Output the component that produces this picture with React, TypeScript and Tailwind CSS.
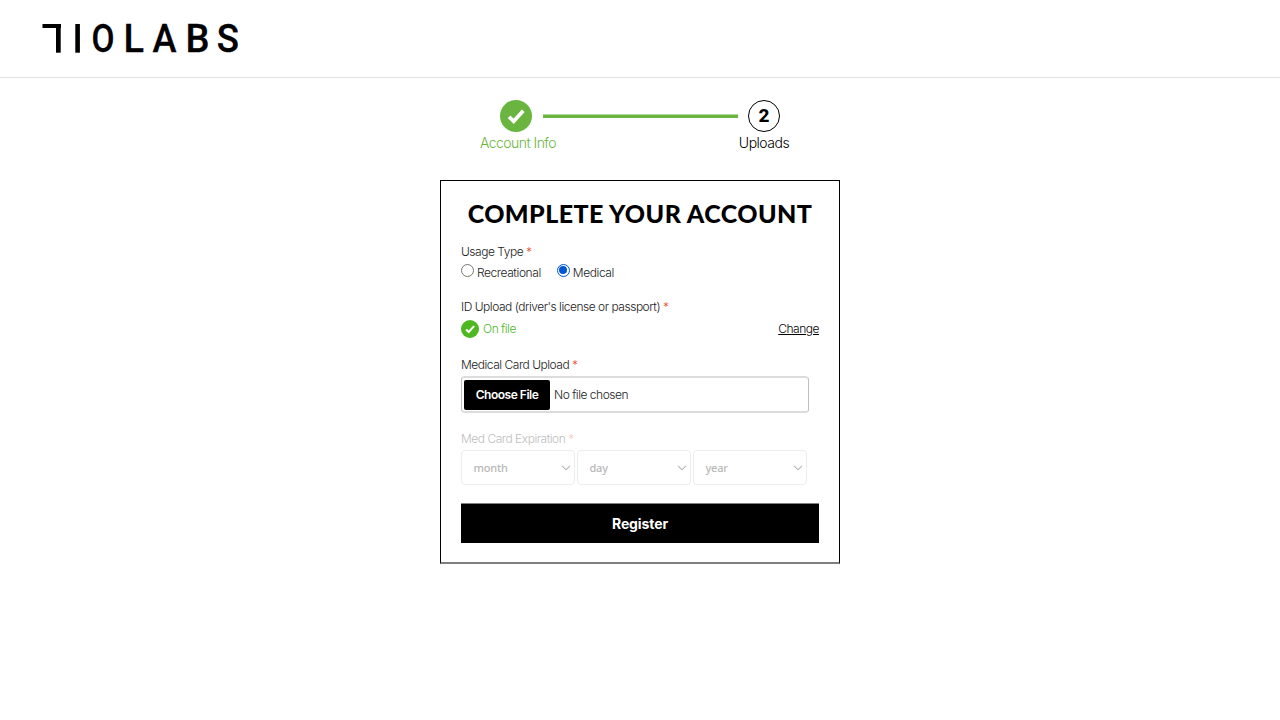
import type { ReactNode } from "react";

const LOGO: { ch: string; x: number; w: number }[] = [
  { ch: "O", x: 49.6, w: 23 },
  { ch: "L", x: 81.5, w: 20.5 },
  { ch: "A", x: 110.5, w: 24 },
  { ch: "B", x: 143.5, w: 24 },
  { ch: "S", x: 174.7, w: 22.2 },
];

function Logo() {
  return (
    <svg width="208" height="56" viewBox="0 -12 208 56" role="img" aria-label="710 Labs" className="block">
      <rect x="0.5" y="2" width="18.5" height="4" />
      <rect x="14" y="2" width="4.7" height="28.7" />
      <rect x="33.3" y="2" width="4.6" height="28.7" />
      {LOGO.map((l) => (
        <text
          key={l.ch}
          x={l.x}
          y="30.2"
          textLength={l.w}
          lengthAdjust="spacingAndGlyphs"
          className="font-['Roboto',sans-serif] text-[39.5px] font-medium"
          stroke="#000"
          strokeWidth="0.3"
        >
          {l.ch}
        </text>
      ))}
    </svg>
  );
}

function Check({ className }: { className: string }) {
  return (
    <svg viewBox="0 0 18 18" className={className} fill="none">
      <path d="M5.1 9.4 7.7 12 13.1 6.1" stroke="#fff" strokeWidth="2.1" />
    </svg>
  );
}

function Label({ children, className = "" }: { children: ReactNode; className?: string }) {
  return (
    <div className={`h-4 text-[12px] leading-4 tracking-[-0.48px] whitespace-nowrap ${className}`}>
      {children} <span className="text-[#e8472b]">*</span>
    </div>
  );
}

function Radio({ label, checked = false }: { label: string; checked?: boolean }) {
  return (
    <label className="flex">
      <span
        className={`mt-[1.5px] mr-[3px] flex size-[13px] items-center justify-center rounded-full border ${
          checked ? "border-[#0057d0]" : "border-[#767676]"
        }`}
      >
        {checked && <span className="size-[8px] rounded-full bg-[#0057d0]" />}
      </span>
      <span className="pt-[3px] text-[12px] leading-4 tracking-[-0.42px]">{label}</span>
    </label>
  );
}

function Select({ label }: { label: string }) {
  return (
    <div className="flex h-[35px] w-[114px] items-center justify-between rounded-[4px] border border-[#ececec] pr-[3px] pl-[11.5px] font-['Noto_Sans',sans-serif] text-[11px] font-medium tracking-[-0.2px] text-[#b8b8b8]">
      <span className="pt-[2px]">{label}</span>
      <svg width="10" height="6" viewBox="0 0 10 6" fill="none" stroke="#b5b5b5" strokeWidth="1.1">
        <path d="M1 .8 5 4.8 9 .8" />
      </svg>
    </div>
  );
}

export default function App() {
  return (
    <div className="min-h-[720px] bg-white font-['Inter','Liberation_Sans',sans-serif] font-light text-[#222]">
      <header className="h-[78px] border-b border-[#e3e3e3] pt-[10px] pl-[42px]">
        <Logo />
      </header>
      <main className="flex flex-col items-center pt-[22px]">
        <div className="flex h-[80px] w-[324px] items-start justify-between pl-[2px]">
          <div className="flex w-[76px] shrink-0 flex-col items-center text-[#69b53f]">
            <div className="mr-[4px] flex size-8 items-center justify-center rounded-full bg-[#69b53f]">
              <Check className="size-8" />
            </div>
            <span className="mt-[2px] text-[14px] leading-[18px] tracking-[-0.55px] whitespace-nowrap">
              Account Info
            </span>
          </div>
          <div className="mt-[14px] -mr-3 -ml-[14px] h-[4px] w-[195px] shrink-0 border-t border-[#b4daa0] bg-[#69b53f]" />
          <div className="flex w-[76px] shrink-0 flex-col items-center text-black">
            <div className="flex size-8 items-center justify-center rounded-full border border-black font-['Roboto',sans-serif] text-[19px] font-extrabold">
              2
            </div>
            <span className="mt-[2px] text-[14px] leading-[18px] tracking-[-0.5px] whitespace-nowrap">Uploads</span>
          </div>
        </div>
        <section className="h-[384px] w-[400px] border border-b-2 border-black border-b-[#808080] px-5 pt-5">
          <h1 className="flex h-[26px] items-center justify-center font-['Lato',sans-serif] text-[25px] font-black tracking-[0.43px] whitespace-nowrap text-black">
            COMPLETE YOUR ACCOUNT
          </h1>
          <Label className="mt-[17px]">Usage Type</Label>
          <div className="mt-[2px] flex h-5 gap-4">
            <Radio label="Recreational" />
            <Radio label="Medical" checked />
          </div>
          <Label className="mt-[17px]">ID Upload (driver's license or passport)</Label>
          <div className="mt-[5px] flex h-[18px] items-center text-[12px] tracking-[-0.48px]">
            <span className="mr-1 size-[18px] rounded-full bg-[#4db81f]">
              <Check className="size-[18px]" />
            </span>
            <span className="text-[#4db81f]">On file</span>
            <a className="ml-auto text-black underline">Change</a>
          </div>
          <Label className="mt-[19px]">Medical Card Upload</Label>
          <div className="mt-[3px] flex h-[37px] w-[348px] items-center rounded-[4px] border border-y-2 border-[#bfbfbf] border-y-[#dcdcdc] pl-[2px] text-[12px] tracking-[-0.48px]">
            <span className="flex h-[30px] w-[86px] items-center justify-center rounded-[2px] bg-black font-semibold text-white">
              Choose File
            </span>
            <span className="ml-1">No file chosen</span>
          </div>
          <Label className="mt-[18px] opacity-30">Med Card Expiration</Label>
          <div className="mt-[3px] flex gap-[2px]">
            <Select label="month" />
            <Select label="day" />
            <Select label="year" />
          </div>
          <button className="mt-[18px] block h-[40px] w-full border-t border-[#808080] bg-black text-[14px] font-bold tracking-[-0.1px] text-white">
            Register
          </button>
        </section>
      </main>
    </div>
  );
}
